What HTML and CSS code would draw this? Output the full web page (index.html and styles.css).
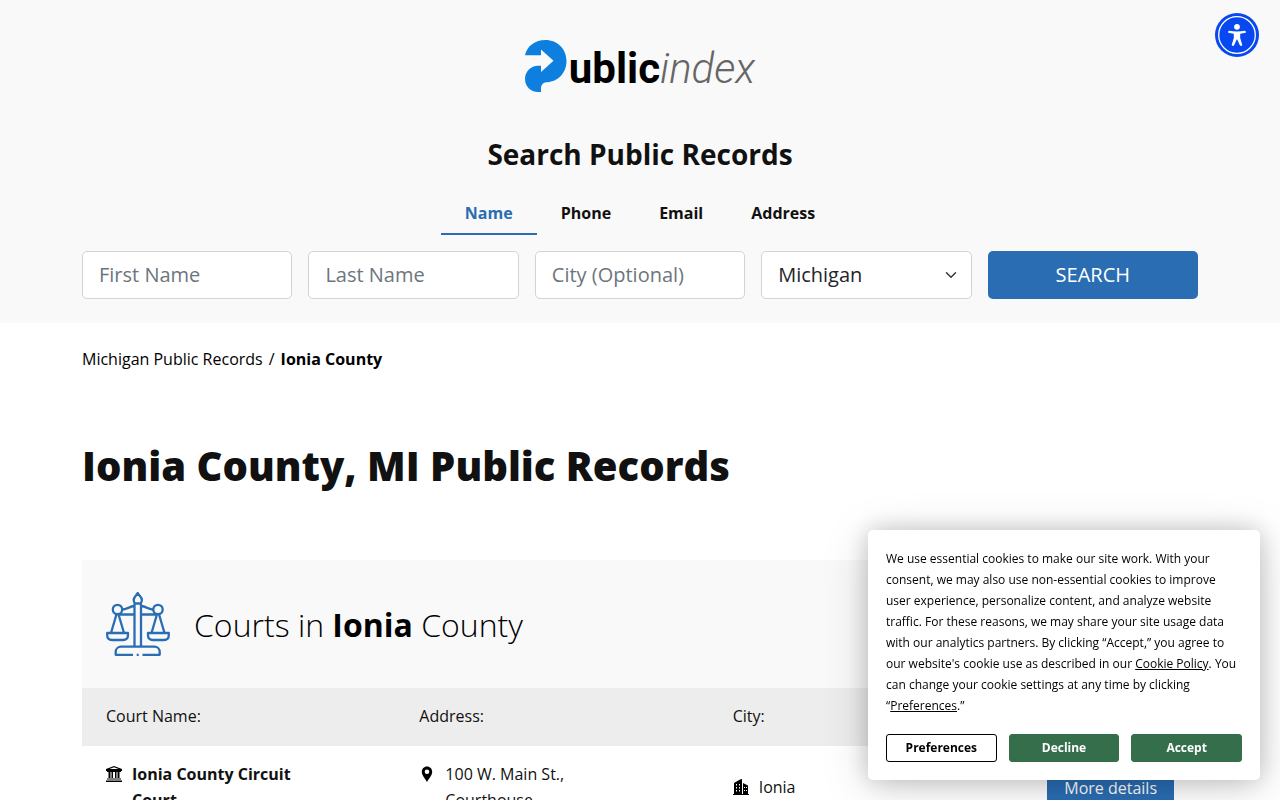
FILE: index.html
```html
<!DOCTYPE html>
<html lang="en">
<head>
<meta charset="utf-8">
<meta name="viewport" content="width=device-width, initial-scale=1">
<title>Ionia County, MI Public Records</title>
<link rel="stylesheet" href="styles.css">
</head>
<body>
<header class="site-header">
  <div class="container">
    <a class="logo" href="#" aria-label="Publicindex">
      <svg class="logo-mark" width="42" height="52" viewBox="0 0 42 52" aria-hidden="true">
        <path fill="#0d80df" d="M0 15.300C2 6 10 0 20.500 0C32.500 0 41.500 9 41.500 21C41.500 33 32.500 42.300 21 42.300Q17 43 16 47V52H13C5.500 52 0 46 0 39C0 31.500 6 25.700 13 25.700H16V32L28.500 20.800L16 9.500V15.300Z"/>
      </svg>
      <span class="logo-bold">ublic</span><span class="logo-light">index</span>
    </a>
    <h2 class="search-title">Search Public Records</h2>
    <nav class="tabs" aria-label="Search type">
      <a class="tab tab-active" href="#name">Name</a>
      <a class="tab" href="#phone">Phone</a>
      <a class="tab" href="#email">Email</a>
      <a class="tab" href="#address">Address</a>
    </nav>
    <form class="search-form">
      <input class="field" type="text" placeholder="First Name" aria-label="First Name">
      <input class="field" type="text" placeholder="Last Name" aria-label="Last Name">
      <input class="field" type="text" placeholder="City (Optional)" aria-label="City (Optional)">
      <div class="select-wrap">
        <select class="field field-select" aria-label="State"><option>Michigan</option></select>
        <svg class="chevron" width="12" height="12" viewBox="0 0 16 16" aria-hidden="true"><path fill="none" stroke="#343a40" stroke-width="2" stroke-linecap="round" stroke-linejoin="round" d="M2 5l6 6 6-6"/></svg>
      </div>
      <button class="search-button" type="button">SEARCH</button>
    </form>
  </div>
</header>

<main class="container">
  <nav class="breadcrumb" aria-label="Breadcrumb">
    <a class="breadcrumb-link" href="#">Michigan Public Records</a><span>/</span><strong>Ionia County</strong>
  </nav>
  <h1 class="page-title">Ionia County, MI Public Records</h1>

  <section class="panel">
    <div class="panel-head">
      <svg class="scales" width="64" height="64" viewBox="0 0 64 64" fill="none" stroke="#2a6db3" stroke-width="2.300" stroke-linejoin="round" aria-hidden="true">
        <path d="M31.700 1C30.500 3.500 27.700 5 27.700 8C27.700 9.500 28.300 10.700 29 11.500H34.500C35.300 10.700 35.900 9.500 35.900 8C35.900 5 33 3.500 31.700 1Z"/>
        <path d="M28.500 11.500V54.500M35 11.500V54.500"/>
        <circle cx="11.500" cy="17.500" r="4.700"/>
        <circle cx="52" cy="17.500" r="4.700"/>
        <path d="M13.500 22.500H28.500M35 22.500H50M16.200 17.500C20.500 17.500 23.500 14.500 28.500 14M47.300 17.500C43 17.500 40 14.500 35 14"/>
        <path d="M10.500 22.200L5 41M12.500 22.200L18 41M51 22.200L45.500 41M53 22.200L58.500 41"/>
        <path d="M1.200 41H22V43C22 46 20 48 17 48H6C3 48 1.200 46 1.200 43ZM42 41H62.800V43C62.800 46 61 48 58 48H47C44 48 42 46 42 43Z"/>
        <path d="M27 62.800H9.700V60C9.700 57 12 54.700 15 54.700H48.500C51.500 54.700 53.700 57 53.700 60V62.800H36.500M30.700 62.800H32.700"/>
      </svg>
      <h2 class="panel-title">Courts in <strong>Ionia</strong> County</h2>
    </div>
    <table class="courts">
      <thead>
        <tr>
          <th scope="col">Court Name:</th>
          <th scope="col">Address:</th>
          <th scope="col">City:</th>
          <th scope="col" class="col-action" aria-label="Details"></th>
        </tr>
      </thead>
      <tbody>
        <tr>
          <td>
            <div class="entry">
              <svg class="entry-icon" width="16" height="16" viewBox="0 0 16 16" aria-hidden="true"><path d="M8 0L0 3V5H1V6H15V5H16V3ZM8 1.300L12.500 3H3.500ZM2.500 6H4.500V12H2.500ZM5.500 6H7V12H5.500ZM9 6H10.500V12H9ZM11.500 6H13.500V12H11.500ZM1 12.500H15V13.500H1ZM0 14.500H16V16H0Z" fill-rule="evenodd"/></svg>
              <strong>Ionia County Circuit Court</strong>
            </div>
          </td>
          <td>
            <div class="entry">
              <svg class="entry-icon" width="16" height="16" viewBox="0 0 16 16" aria-hidden="true"><path fill-rule="evenodd" d="M8 16C6.200 12.500 2.800 9.500 2.800 5.800C2.800 2.800 5 .5 8 .5S13.200 2.800 13.200 5.800C13.200 9.500 9.800 12.500 8 16ZM8 3.400A2.300 2.300 0 1 0 8 8A2.300 2.300 0 1 0 8 3.400Z"/></svg>
              <span>100 W. Main St., Courthouse</span>
            </div>
          </td>
          <td>
            <div class="entry">
              <svg class="entry-icon" width="16" height="16" viewBox="0 0 16 16" aria-hidden="true"><path fill-rule="evenodd" d="M1 15V4L7 .5L9 0V15H10V4L15 6.500V15H16V16H0V15ZM3 5V6.500H4V5ZM6 5V6.500H7V5ZM3 8V9.500H4V8ZM6 8V9.500H7V8ZM3 11V12.500H4V11ZM6 11V12.500H7V11ZM11 8V9H12V8ZM13 8V9H14V8ZM11 11V12H12V11ZM13 11V12H14V11Z"/></svg>
              <span>Ionia</span>
            </div>
          </td>
          <td class="col-action"><a class="details" href="#">More details</a></td>
        </tr>
      </tbody>
    </table>
  </section>
</main>

<button class="access-button" type="button" aria-label="Accessibility menu">
  <svg width="44" height="44" viewBox="0 0 44 44" aria-hidden="true">
    <circle cx="22" cy="22" r="22" fill="#0848f0"/>
    <circle cx="22" cy="22" r="18.300" fill="none" stroke="#fff" stroke-width="1.300"/>
    <circle cx="22" cy="13.800" r="2.900" fill="#fff"/>
    <path fill="#fff" d="M14 17.800Q22 19.400 30 17.800Q31.300 18.200 30.800 19.700L25.200 20.800V25L27.300 32Q26.300 33.600 25 32.500L22.300 26.500H21.700L19 32.500Q17.700 33.600 16.700 32L18.800 25V20.800L13.200 19.700Q12.700 18.200 14 17.800Z"/>
  </svg>
</button>

<section class="cookie" aria-label="Cookie consent">
  <p class="cookie-text">We use essential cookies to make our site work. With your consent, we may also use non-essential cookies to improve user experience, personalize content, and analyze website traffic. For these reasons, we may share your site usage data with our analytics partners. By clicking “Accept,” you agree to our website's cookie use as described in our <a href="#">Cookie Policy</a>. You can change your cookie settings at any time by clicking “<a href="#">Preferences</a>.”</p>
  <div class="cookie-actions">
    <button class="cookie-button cookie-outline" type="button">Preferences</button>
    <button class="cookie-button" type="button">Decline</button>
    <button class="cookie-button" type="button">Accept</button>
  </div>
</section>
</body>
</html>
```
FILE: styles.css
```css
* { box-sizing: border-box; }
body {
  margin: 0;
  background: #fff;
  color: #111;
  font-family: "Open Sans", "Noto Sans", sans-serif;
  font-size: 16px;
  line-height: 26px;
}
a { color: inherit; text-decoration: none; }
h1, h2, p { margin: 0; }
.container { max-width: 1140px; margin: 0 auto; padding: 0 12px; }

.site-header { background: #f9f9f9; padding: 40px 0 24px; }
.logo {
  display: flex;
  justify-content: center;
  height: 52px;
  font-family: Roboto, sans-serif;
  font-size: 42px;
  line-height: 57px;
}
.logo-mark { margin-right: 2px; }
.logo-bold { font-weight: 700; color: #000; }
.logo-light { font-weight: 300; font-style: italic; color: #666; }
.search-title {
  margin-top: 44px;
  text-align: center;
  font-size: 28px;
  line-height: 36px;
  font-weight: 700;
}
.tabs { display: flex; justify-content: center; margin: 19px 0 16px; }
.tab { padding: 9px 24px 7px; border-bottom: 2px solid transparent; font-weight: 700; }
.tab-active { color: #2a6db3; border-color: #2a6db3; }
.search-form { display: grid; grid-template-columns: repeat(5, 1fr); gap: 16px; }
.field {
  width: 100%;
  height: 48px;
  padding: 7px 16px 9px;
  border: 1px solid #ced4da;
  border-radius: 5px;
  background: #fff;
  color: #212529;
  font: inherit;
  font-size: 20px;
  line-height: 30px;
}
.field::placeholder { color: #6c757d; opacity: 1; }
.select-wrap { display: grid; align-items: center; }
.field-select { grid-area: 1 / 1; appearance: none; padding: 8px 16px; }
.chevron { grid-area: 1 / 1; justify-self: end; margin-right: 15px; pointer-events: none; }
.search-button {
  height: 48px;
  border: 0;
  border-radius: 5px;
  background: #2a6db3;
  color: #fff;
  font: inherit;
  font-size: 20px;
}

.breadcrumb { display: flex; gap: 6px; padding-top: 23px; color: #000; }
.breadcrumb-link { font-weight: 500; }
.page-title { margin-top: 70px; font-size: 40px; line-height: 48px; font-weight: 800; }

.panel { margin-top: 70px; }
.panel-head { display: flex; align-items: center; gap: 24px; padding: 32px 24px; background: #f9f9f9; }
.panel-title { padding-top: 2px; font-size: 32px; line-height: 40px; font-weight: 300; color: #000; }
.panel-title strong { font-weight: 700; }
.courts { width: 100%; border-collapse: collapse; table-layout: fixed; }
.courts th { padding: 15px 24px 17px; background: #ededed; text-align: left; font-weight: 400; }
.courts td { padding: 15px 80px 17px 24px; vertical-align: middle; }
.courts th.col-action { width: 176px; }
.courts td.col-action { padding: 0 24px 0 0; text-align: right; }
.entry { display: flex; gap: 10px; }
.entry-icon { flex: none; margin-top: 5px; fill: #000; }
.details {
  display: inline-block;
  padding: 6px 17px;
  background: #2a6db3;
  color: #fff;
}

.access-button {
  position: fixed;
  top: 13px;
  right: 21px;
  width: 44px;
  height: 44px;
  padding: 0;
  border: 0;
  border-radius: 50%;
  background: none;
}
.cookie {
  position: fixed;
  right: 20px;
  bottom: 20px;
  width: 392px;
  padding: 18px;
  border-radius: 5px;
  background: #fff;
  box-shadow: 0 8px 48px rgba(0, 0, 0, 0.15), 0 0 24px rgba(0, 0, 0, 0.2);
  color: #000;
}
.cookie-text { font-size: 12px; line-height: 21px; }
.cookie-text a { text-decoration: underline; }
.cookie-actions { display: grid; grid-template-columns: repeat(3, 1fr); gap: 12px; margin-top: 18px; }
.cookie-button {
  height: 28px;
  padding: 0;
  border: 1px solid #356e4a;
  border-radius: 3px;
  background: #356e4a;
  color: #fff;
  font: inherit;
  font-size: 12px;
  line-height: 16px;
  font-weight: 700;
}
.cookie-outline { border-color: #000; background: #fff; color: #000; }
```
